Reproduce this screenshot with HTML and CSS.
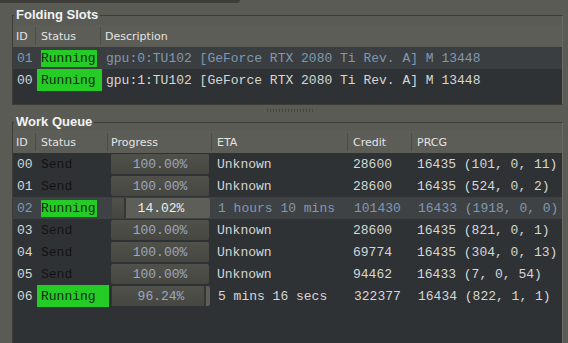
FILE: index.html
```html
<!DOCTYPE html>
<html lang="en">
<head>
  <meta charset="UTF-8">
  <title>Folding Slots</title>
  <link rel="stylesheet" href="styles.css">
</head>
<body>
  <div class="toptab"></div>

  <fieldset class="group slots">
    <legend>Folding Slots</legend>
    <div class="row head">
      <div class="cell id">ID</div>
      <div class="cell status">Status</div>
      <div class="cell desc">Description</div>
    </div>
    <div class="body">
      <div class="row sel">
        <div class="cell id">01</div>
        <div class="cell status running"><span>Running</span></div>
        <div class="cell desc">gpu:0:TU102 [GeForce RTX 2080 Ti Rev. A] M 13448</div>
      </div>
      <div class="row">
        <div class="cell id">00</div>
        <div class="cell status running"><span>Running</span></div>
        <div class="cell desc">gpu:1:TU102 [GeForce RTX 2080 Ti Rev. A] M 13448</div>
      </div>
    </div>
  </fieldset>

  <div class="splitter"><div class="grip"></div></div>

  <fieldset class="group queue">
    <legend>Work Queue</legend>
    <div class="row head">
      <div class="cell id">ID</div>
      <div class="cell status">Status</div>
      <div class="cell progress">Progress</div>
      <div class="cell eta">ETA</div>
      <div class="cell credit">Credit</div>
      <div class="cell prcg">PRCG</div>
    </div>
    <div class="body" id="queue-body"></div>
  </fieldset>

  <script>
    const units = [
      ['00', 'Send', 100, '100.00%', 'Unknown', '28600', '16435 (101, 0, 11)'],
      ['01', 'Send', 100, '100.00%', 'Unknown', '28600', '16435 (524, 0, 2)'],
      ['02', 'Running', 14.02, '14.02%', '1 hours 10 mins', '101430', '16433 (1918, 0, 0)'],
      ['03', 'Send', 100, '100.00%', 'Unknown', '28600', '16435 (821, 0, 1)'],
      ['04', 'Send', 100, '100.00%', 'Unknown', '69774', '16435 (304, 0, 13)'],
      ['05', 'Send', 100, '100.00%', 'Unknown', '94462', '16433 (7, 0, 54)'],
      ['06', 'Running', 96.24, '96.24%', '5 mins 16 secs', '322377', '16434 (822, 1, 1)']
    ];
    const selected = '02';

    document.getElementById('queue-body').innerHTML = units
      .map(([id, status, pct, label, eta, credit, prcg]) => `
        <div class="row${id === selected ? ' sel' : ''}">
          <div class="cell id">${id}</div>
          <div class="cell status ${status.toLowerCase()}"><span>${status}</span></div>
          <div class="cell progress">
            <div class="bar">
              <div class="fill${pct < 100 ? ' part' : ''}" style="width: ${pct}%"></div>
              <span class="label">${label}</span>
            </div>
          </div>
          <div class="cell eta">${eta}</div>
          <div class="cell credit">${credit}</div>
          <div class="cell prcg">${prcg}</div>
        </div>
      `)
      .join('');
  </script>
</body>
</html>
```

FILE: styles.css
```css
html, body {
  margin: 0;
  padding: 0;
}

body {
  width: 568px;
  height: 343px;
  overflow: hidden;
  background-color: #5a5b55;
  font-family: "DejaVu Sans", sans-serif;
  font-size: 11px;
  color: #e4e4e4;
}

.toptab {
  width: 240px;
  height: 3px;
  background: #3d3e3a;
  border-bottom-right-radius: 3px;
}

.group {
  margin: 5px 5px 0 12px;
  padding: 3px 0 0 0;
  border: 1px solid #3c3d39;
  border-right-color: #6a6b65;
  min-width: 0;
}

.group legend {
  margin-left: 1px;
  padding: 0 2px;
  line-height: 14px;
  font-family: "Liberation Sans", sans-serif;
  font-size: 13px;
  font-weight: bold;
  color: #f2f2f2;
}

.queue {
  margin-top: 0;
  padding-top: 2px;
  border-bottom: none;
}

.row {
  display: flex;
  height: 22px;
  align-items: stretch;
}

.row.head {
  background: #5c5d57;
}

.cell {
  display: flex;
  align-items: center;
  padding-left: 5px;
  white-space: nowrap;
  box-sizing: border-box;
  flex-shrink: 0;
}

.head .cell {
  border-right: 1px solid #4b4c47;
  margin: 2px 0;
}

.head .cell:last-child {
  border-right: none;
  flex: 1;
}

.cell.id { width: 23px; padding-left: 3px; }
.slots .cell.status { width: 65px; }
.queue .cell.status { width: 72px; }
.cell.desc { flex: 1; padding-left: 4px; }
.cell.progress { width: 104px; padding: 1px 3px; }
.cell.eta { width: 136px; }
.cell.credit { width: 64px; }
.cell.prcg { flex: 1; }

.body {
  background: #2f3234;
  font-family: "Liberation Mono", monospace;
  font-size: 13px;
  color: #d6d6d6;
}

.slots .body {
  height: 57px;
}

.queue .body {
  height: 190px;
}

.body .cell.id { padding-left: 4px; }

.row.sel {
  background: #3b3e40;
  color: #8198b2;
}

.queue .row.sel {
  background: #3f4244;
}

.cell.send {
  color: #121212;
}

.cell.running {
  background: #26cc26;
  color: #0b2a0b;
  margin-left: 1px;
  padding-left: 4px;
}

.row.sel .cell.running {
  background: none;
}

.row.sel .cell.running span {
  background: #26cc26;
  color: #0b2a0b;
  line-height: 17px;
  padding-right: 1px;
}

.bar {
  position: relative;
  width: 98px;
  height: 20px;
  background: #5d5e58;
  border-radius: 2px;
  overflow: hidden;
}

.fill {
  height: 100%;
  background: linear-gradient(#51514c, #464642);
}

.fill.part {
  border-right: 2px solid #353633;
  box-sizing: border-box;
}

.bar .label {
  position: absolute;
  inset: 0;
  display: flex;
  align-items: center;
  justify-content: center;
  color: #9aa8c0;
}

.row.sel .bar .label {
  color: #ececec;
}

.splitter {
  height: 10px;
  display: flex;
  justify-content: center;
  align-items: center;
  margin-left: 12px;
}

.grip {
  width: 46px;
  height: 3px;
  background: repeating-linear-gradient(90deg, #45463f 0 1px, transparent 1px 3px);
}
```
